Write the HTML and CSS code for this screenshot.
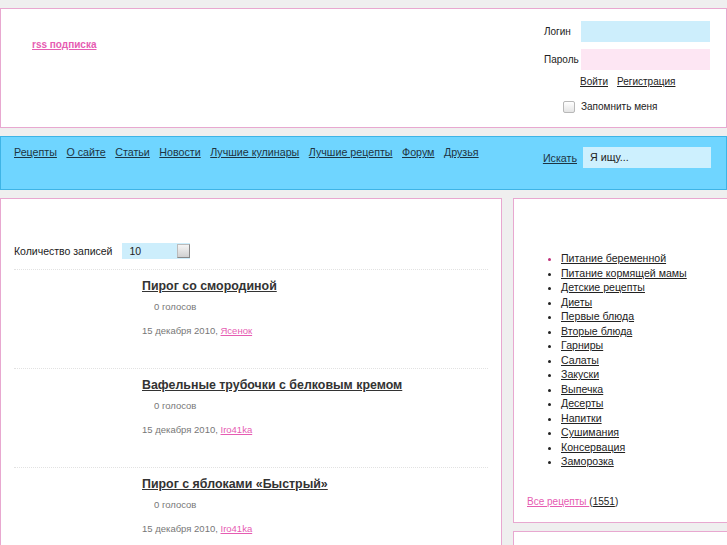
FILE: index.html
```html
<!DOCTYPE html>
<html lang="ru">
<head>
<meta charset="utf-8">
<title>Рецепты</title>
<link rel="stylesheet" href="styles.css">
</head>
<body>
<div class="page">
  <header class="header">
    <a class="rss" href="#">rss подписка</a>
    <form class="login">
      <div class="login-grid">
        <span class="lbl">Логин</span><span class="inp inp-blue"></span>
        <span class="lbl">Пароль</span><span class="inp inp-pink"></span>
      </div>
      <div class="login-links"><a href="#">Войти</a><a href="#">Регистрация</a></div>
      <div class="remember"><span class="cb"></span><span>Запомнить меня</span></div>
    </form>
  </header>

  <nav class="nav">
    <div class="menu">
      <a href="#">Рецепты</a><a href="#">О сайте</a><a href="#">Статьи</a><a href="#">Новости</a><a href="#">Лучшие кулинары</a><a href="#">Лучшие рецепты</a><a href="#">Форум</a><a href="#">Друзья</a>
    </div>
    <div class="search"><a href="#">Искать</a><span class="search-inp">Я ищу...</span></div>
  </nav>

  <div class="cols">
    <main class="main">
      <div class="count"><span>Количество записей</span><span class="select"><span class="sel-val">10</span><span class="sel-btn"></span></span></div>
      <div class="item">
        <a class="title" href="#">Пирог со смородиной</a>
        <div class="votes">0 голосов</div>
        <div class="date">15 декабря 2010, <a href="#">Ясенок</a></div>
      </div>
      <div class="item">
        <a class="title" href="#">Вафельные трубочки с белковым кремом</a>
        <div class="votes">0 голосов</div>
        <div class="date">15 декабря 2010, <a href="#">Iro41ka</a></div>
      </div>
      <div class="item">
        <a class="title" href="#">Пирог с яблоками «Быстрый»</a>
        <div class="votes">0 голосов</div>
        <div class="date">15 декабря 2010, <a href="#">Iro41ka</a></div>
      </div>
    </main>
    <aside class="side">
      <div class="side-box">
        <ul class="cats">
          <li class="active"><a href="#">Питание беременной</a></li>
          <li><a href="#">Питание кормящей мамы</a></li>
          <li><a href="#">Детские рецепты</a></li>
          <li><a href="#">Диеты</a></li>
          <li><a href="#">Первые блюда</a></li>
          <li><a href="#">Вторые блюда</a></li>
          <li><a href="#">Гарниры</a></li>
          <li><a href="#">Салаты</a></li>
          <li><a href="#">Закуски</a></li>
          <li><a href="#">Выпечка</a></li>
          <li><a href="#">Десерты</a></li>
          <li><a href="#">Напитки</a></li>
          <li><a href="#">Сушимания</a></li>
          <li><a href="#">Консервация</a></li>
          <li><a href="#">Заморозка</a></li>
        </ul>
        <div class="all"><a class="pink" href="#">Все рецепты </a>(<a href="#">1551</a>)</div>
      </div>
      <div class="side-box2"></div>
    </aside>
  </div>
</div>
</body>
</html>
```

FILE: styles.css
```css
html, body {
  margin: 0;
  padding: 0;
}
body {
  background: #efefef;
  font-family: "Liberation Sans", Arial, sans-serif;
  font-size: 11px;
  color: #222;
  overflow: hidden;
  width: 727px;
  height: 545px;
}
a { color: #222; }
.page {
  padding-top: 8px;
  width: 727px;
}
.header {
  height: 118px;
  background: #fff;
  border: 1px solid #e8a8d0;
  display: flex;
  justify-content: space-between;
}
.rss {
  margin: 30px 0 0 31px;
  font-size: 10px;
  font-weight: bold;
  color: #e65cb2;
  align-self: flex-start;
}
.login {
  margin: 12px 16px 0 0;
  display: flex;
  flex-direction: column;
  align-items: flex-end;
  font-size: 10px;
}
.login-grid {
  display: grid;
  grid-template-columns: 37px 129px;
  row-gap: 7px;
  align-items: center;
}
.inp { display: block; height: 21px; }
.inp-blue { background: #cdeefc; }
.inp-pink { background: #fde6f3; }
.login-links {
  margin-top: 6px;
  width: 130px;
  display: flex;
  gap: 9px;
  line-height: 12px;
}
.remember {
  margin-top: 13px;
  width: 147px;
  display: flex;
  align-items: center;
  gap: 6px;
  line-height: 12px;
}
.cb {
  width: 10px;
  height: 10px;
  border: 1px solid #b8b8b8;
  border-radius: 2px;
  background: linear-gradient(#fff, #e4e4e4);
}
.nav {
  margin-top: 8px;
  height: 52px;
  background: #6fd5ff;
  border: 1px solid #3eb4e6;
  display: flex;
  justify-content: space-between;
  align-items: flex-start;
}
.menu {
  margin: 9px 0 0 13px;
  display: flex;
  gap: 9.5px;
  line-height: 13px;
  font-size: 10.7px;
}
.menu a, .search a { color: #1e3442; }
.search {
  margin: 10px 15px 0 0;
  display: flex;
  align-items: center;
  gap: 6px;
  font-size: 10.7px;
}
.search-inp {
  width: 121px;
  height: 21px;
  padding-left: 7px;
  background: #cdf0fe;
  line-height: 21px;
  font-size: 10.7px;
  color: #222;
}
.cols {
  margin-top: 8px;
  display: flex;
  gap: 11px;
  align-items: flex-start;
}
.main {
  flex: none;
  width: 474px;
  height: 346px;
  overflow: hidden;
  padding: 0 13px;
  background: #fff;
  border: 1px solid #e8a8d0;
  border-bottom: none;
}
.count {
  margin-top: 44px;
  display: flex;
  align-items: center;
  gap: 10px;
  font-size: 10.5px;
  padding-bottom: 10px;
  border-bottom: 1px dotted #e2e2e2;
}
.select {
  width: 68px;
  height: 16px;
  background: #cdeefc;
  display: flex;
  justify-content: space-between;
  align-items: center;
}
.sel-val { padding-left: 7px; }
.sel-btn {
  width: 13px;
  height: 14px;
  background: linear-gradient(#f4f4f4, #d0d0d0);
  border: 1px solid #bbb;
  border-right-color: #888;
  border-bottom-color: #888;
  box-sizing: border-box;
}
.item {
  height: 99px;
  padding-left: 128px;
  border-bottom: 1px dotted #e2e2e2;
  box-sizing: border-box;
  padding-top: 9px;
}
.title {
  font-size: 12.4px;
  font-weight: bold;
  color: #333;
  line-height: 15px;
}
.votes {
  margin-top: 6px;
  padding-left: 12px;
  font-size: 9.5px;
  color: #777;
  line-height: 13px;
}
.date {
  margin-top: 11px;
  font-size: 9.5px;
  color: #777;
  line-height: 13px;
}
.date a { color: #e65cb2; }
.side {
  flex: none;
  display: flex;
  flex-direction: column;
  gap: 8px;
}
.side-box {
  height: 325px;
  width: 230px;
  background: #fff;
  border: 1px solid #e8a8d0;
  box-sizing: border-box;
}
.side-box2 {
  height: 13px;
  width: 230px;
  background: #fff;
  border: 1px solid #e8a8d0;
  border-bottom: none;
}
.cats {
  margin: 52px 0 0 0;
  padding-left: 47px;
  line-height: 14.5px;
  font-size: 10.6px;
}
.cats li.active::marker { color: #c0307a; }
.all {
  margin-top: 27px;
  padding-left: 13px;
  font-size: 10px;
}
.all .pink { color: #e65cb2; }
```
